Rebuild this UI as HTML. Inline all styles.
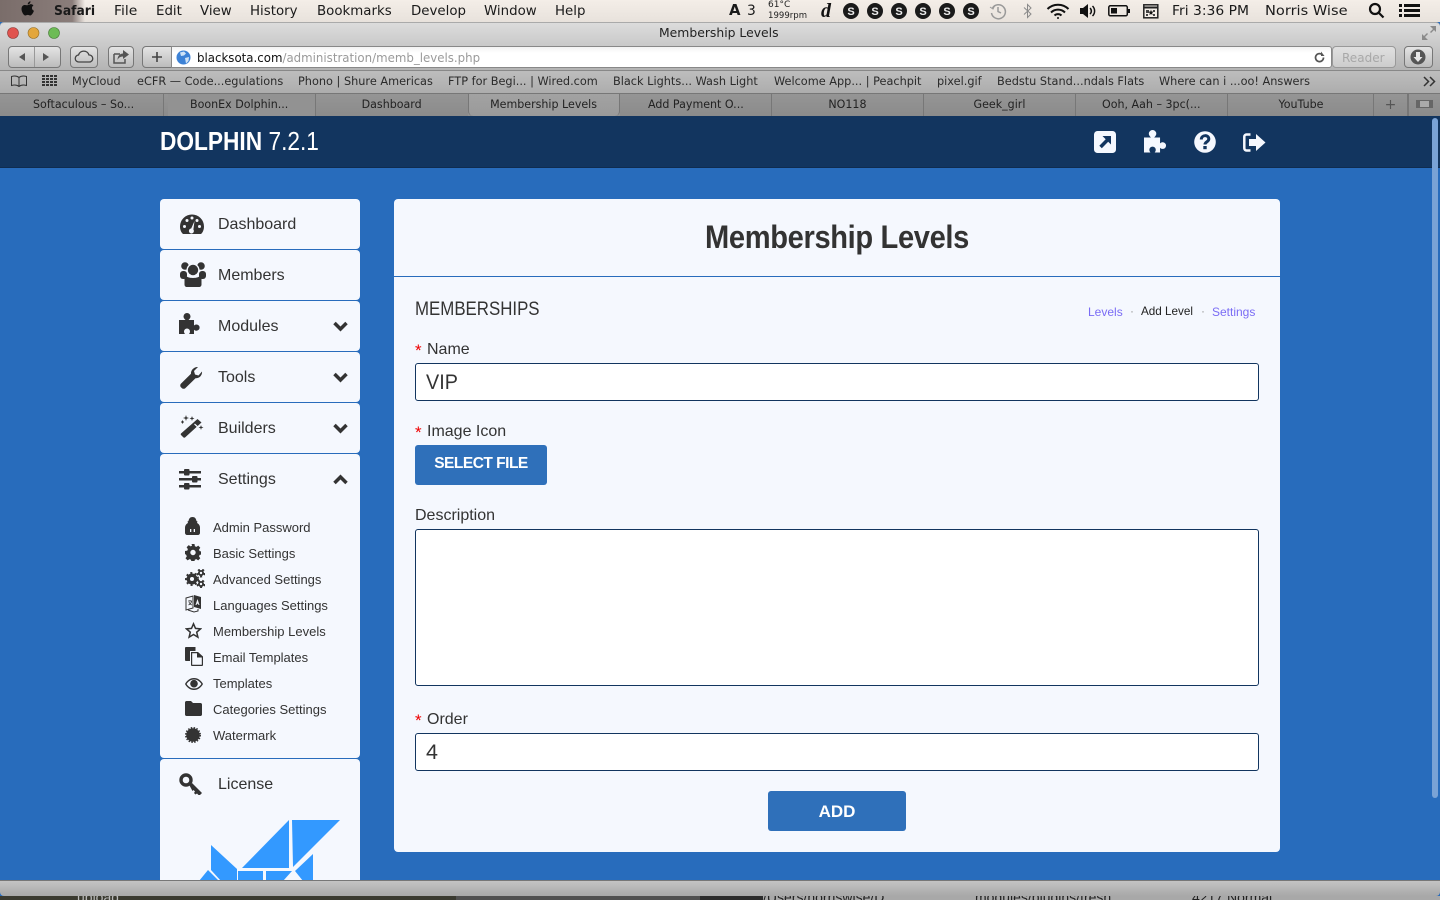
<!DOCTYPE html>
<html><head><meta charset="utf-8"><title>Membership Levels</title>
<style>
html,body{margin:0;padding:0;width:1440px;height:900px;overflow:hidden;background:#286cbc;font-family:"Liberation Sans",sans-serif;color:#333}
div,span,svg{position:absolute;box-sizing:border-box}
.t{white-space:nowrap;line-height:1}
.m{font-family:"DejaVu Sans",sans-serif;font-size:13.5px;color:#1a1a1a;top:5px;transform-origin:0 0;transform:scaleX(.99)}
.b{font-family:"DejaVu Sans",sans-serif;font-size:11.3px;color:#2a2a2a;top:76px;font-weight:400;transform-origin:0 0;transform:scaleX(1)}
.tab{top:94px;height:22px;border-right:1px solid #777;background:linear-gradient(#959595,#8b8b8b);font-family:"DejaVu Sans",sans-serif;font-size:11.3px;color:#222;text-align:center;line-height:22px;white-space:nowrap}
.tab span{position:static;display:inline-block;transform:scaleX(.98)}
.card{background:#f5f8fe;left:160px;width:200px;height:50px;border-radius:4px}
.mi{left:218px;font-size:16px;color:#333}
.si{left:213px;font-size:13px;color:#333}
.lab{font-size:16px;color:#333;left:427px}
.star{font-size:17px;color:#e00;left:415px}
.inp{left:415px;width:844px;background:#fff;border:1px solid #12355f;border-radius:3px}
.btn{background:#2f70ba;border-radius:3px;color:#fff;font-weight:700;text-align:center}
.ic{fill:#333}
</style></head><body>
<div style="left:0;top:0;width:1440px;height:900px;overflow:hidden">

<!-- menu bar -->
<div style="left:0;top:0;width:1440px;height:22px;background:linear-gradient(#f4eee8,#e8e2dc)"></div>
<div style="left:0;top:0;width:85px;height:22px;background:linear-gradient(90deg,#7a6d6a,#8a7d7a 85%,rgba(138,125,122,0))"></div>
<svg style="left:19px;top:1px" width="17" height="17" viewBox="0 0 17 17"><path fill="#111" d="M9 4c1 0 2-.9 2.800-.9 1 0 2 .5 2.600 1.400-2.200 1.300-1.800 4.400.6 5.300-.8 2-2.300 4.700-3.800 4.700-1 0-1.400-.6-2.400-.6s-1.500.6-2.400.6C4.500 14.500 2.500 10.500 2.500 8c0-2.700 1.700-4 3.400-4C7 4 8 4.600 9 4zM8.700 3.500c0-1.500 1.200-3 2.800-3.200.1 1.700-1.300 3.200-2.800 3.200z"/></svg>
<span class="t m" style="left:54px;font-weight:700;transform:scaleX(.91)">Safari</span>
<span class="t m" style="left:114px;transform:scaleX(1.03)">File</span>
<span class="t m" style="left:156px">Edit</span>
<span class="t m" style="left:200px">View</span>
<span class="t m" style="left:250px">History</span>
<span class="t m" style="left:317px">Bookmarks</span>
<span class="t m" style="left:411px">Develop</span>
<span class="t m" style="left:484px">Window</span>
<span class="t m" style="left:555px">Help</span>
<span class="t m" style="left:729px;font-weight:700;font-size:15px;top:3px">A</span><span class="t m" style="left:747px;font-size:14px;top:4px">3</span>
<span class="t" style="left:768px;top:1px;font-size:9px;color:#222;font-family:'DejaVu Sans',sans-serif">61°C</span>
<span class="t" style="left:768px;top:12px;font-size:9px;color:#222;font-family:'DejaVu Sans',sans-serif;transform-origin:0 0;transform:scaleX(.95)">1999rpm</span>
<span class="t" style="left:821px;top:1px;font-size:20px;font-weight:700;font-style:italic;font-family:'Liberation Serif',serif;color:#111">d</span>
<svg style="left:842px;top:2px" width="138" height="18" viewBox="0 0 138 18" font-family="Liberation Sans" font-weight="700" font-size="11" text-anchor="middle">
<g fill="#1a1a1a"><circle cx="9" cy="9" r="8"/><circle cx="33" cy="9" r="8"/><circle cx="57" cy="9" r="8"/><circle cx="81" cy="9" r="8"/><circle cx="105" cy="9" r="8"/><circle cx="129" cy="9" r="8"/></g>
<g fill="#eee" font-size="11"><text x="9" y="13">S</text><text x="33" y="13">S</text><text x="57" y="13">S</text><text x="81" y="13">S</text><text x="105" y="13">S</text><text x="129" y="13">S</text></g></svg>
<svg style="left:989px;top:2px" width="18" height="18" viewBox="0 0 18 18" fill="none" stroke="#999" stroke-width="1.500"><path d="M3.500 6A7 7 0 1 1 2.500 11"/><path d="M9 5v4.500l3 1.500"/><path d="M1 5l3 2 1.500-3" stroke-width="1"/></svg>
<svg style="left:1022px;top:3px" width="11" height="16" viewBox="0 0 11 16" fill="none" stroke="#8a8a8a" stroke-width="1"><path d="M2 4.500l7 6.500-3.500 3.500V1.500L9 5 2 11.500"/></svg>
<svg style="left:1046px;top:3px" width="24" height="16" viewBox="0 0 24 16" fill="none" stroke="#111" stroke-width="2"><path d="M1.500 6a15 15 0 0 1 21 0M5 9.500a10 10 0 0 1 14 0M8.500 12.500a5 5 0 0 1 7 0"/><circle cx="12" cy="15" r="1" fill="#111" stroke="none"/></svg>
<svg style="left:1079px;top:3px" width="19" height="16" viewBox="0 0 19 16"><path fill="#111" d="M1 5h3l5-4v14l-5-4H1z"/><path fill="none" stroke="#111" stroke-width="1.500" d="M11 5a4 4 0 0 1 0 6M13.500 3a7 7 0 0 1 0 10"/></svg>
<svg style="left:1108px;top:4px" width="23" height="14" viewBox="0 0 23 14"><rect x=".8" y="1.800" width="18.500" height="10" rx="1.500" fill="none" stroke="#111" stroke-width="1.500"/><rect x="3" y="4" width="6" height="5.500" fill="#111"/><rect x="20" y="5" width="2" height="4" fill="#111"/></svg>
<svg style="left:1143px;top:3px" width="16" height="16" viewBox="0 0 16 16"><rect x=".8" y="1.800" width="14" height="13" fill="#f4eee8" stroke="#222" stroke-width="1.500"/><path d="M.8 4.500h14" stroke="#222" stroke-width="2"/><path d="M3 7h3v3H3zM10 7h2v2h-2zM3 11h2v2H3zM10 11h2v2h-2z" fill="#444"/><path d="M8 6.500l.6 2 2 .2-1.500 1.300.5 2-1.600-1-1.700 1 .5-2L5.400 8.700l2-.2z" fill="#111"/></svg>
<span class="t m" style="left:1172px;transform:scaleX(1.03)">Fri 3:36 PM</span>
<span class="t m" style="left:1265px;transform:scaleX(1.08)">Norris Wise</span>
<svg style="left:1368px;top:2px" width="17" height="17" viewBox="0 0 17 17" fill="none" stroke="#111" stroke-width="2.200"><circle cx="7" cy="7" r="5"/><path d="M10.500 10.500l5 5"/></svg>
<svg style="left:1399px;top:3px" width="21" height="15" viewBox="0 0 21 15" fill="#111"><rect x="0" y="1" width="3" height="3"/><rect x="0" y="6" width="3" height="3"/><rect x="0" y="11" width="3" height="3"/><rect x="5" y="1" width="16" height="3"/><rect x="5" y="6" width="16" height="3"/><rect x="5" y="11" width="16" height="3"/></svg>

<!-- title bar + toolbar -->
<div style="left:0;top:22px;width:1440px;height:48px;background:linear-gradient(#dcdcdc,#b4b4b4);border-top:1px solid #aaa;border-radius:4px 4px 0 0"></div>
<svg style="left:7px;top:27px" width="56" height="12" viewBox="0 0 56 12"><circle cx="6" cy="6" r="5.500" fill="#e0534e" stroke="#8c3a38" stroke-width=".6"/><circle cx="26.500" cy="6" r="5.500" fill="#e3a63c" stroke="#96702a" stroke-width=".6"/><circle cx="47" cy="6" r="5.500" fill="#6dbb55" stroke="#477a38" stroke-width=".6"/></svg>
<span class="t" style="left:659px;top:27px;font-family:'DejaVu Sans',sans-serif;font-size:12.500px;color:#222;transform-origin:0 0;transform:scaleX(.99)">Membership Levels</span>
<svg style="left:1422px;top:26px" width="14" height="14" viewBox="0 0 14 14" fill="#8a8a8a"><path d="M8 0h6v6l-2-2-3 3-1-1 3-3zM6 14H0V8l2 2 3-3 1 1-3 3z"/></svg>

<div style="left:8px;top:46px;width:53px;height:22px;border:1px solid #777;border-radius:4px;background:linear-gradient(#e4e4e4,#bcbcbc)"></div>
<div style="left:34px;top:47px;width:1px;height:20px;background:#999"></div>
<svg style="left:8px;top:46px" width="53" height="22" viewBox="0 0 53 22" fill="#555"><path d="M17 7v8l-6-4zM35 7v8l6-4z"/></svg>
<div style="left:70px;top:46px;width:28px;height:22px;border:1px solid #777;border-radius:4px;background:linear-gradient(#e4e4e4,#bcbcbc)"></div>
<svg style="left:74px;top:48px" width="20" height="18" viewBox="0 0 20 18" fill="none" stroke="#444" stroke-width="1.300"><path d="M5 14a3.500 3.500 0 0 1-.5-7A5.500 5.500 0 0 1 15 7a3.500 3.500 0 0 1 .5 7z"/></svg>
<div style="left:108px;top:46px;width:26px;height:22px;border:1px solid #777;border-radius:4px;background:linear-gradient(#e4e4e4,#bcbcbc)"></div>
<svg style="left:112px;top:49px" width="18" height="16" viewBox="0 0 18 16"><path d="M2 5h6M2 5v9h11v-4" fill="none" stroke="#555" stroke-width="1.500"/><path fill="#555" d="M11 1l6 4.500-6 4.500V7.500C8 7.500 6.500 9 5.500 11c0-4 2.500-6.500 5.500-6.500z"/></svg>
<div style="left:142px;top:46px;width:1130px;height:22px;border:1px solid #777;border-radius:4px 0 0 4px;background:linear-gradient(#e4e4e4,#bcbcbc)"></div>
<svg style="left:150px;top:50px" width="14" height="14" viewBox="0 0 14 14" fill="#444"><path d="M6.200 2h1.600v4.200H12v1.600H7.800V12H6.200V7.800H2V6.200h4.200z"/></svg>
<div style="left:171px;top:46px;width:1161px;height:22px;border:1px solid #888;background:linear-gradient(#f2f2f2,#fff 30%);border-radius:0 3px 3px 0"></div>
<svg style="left:176px;top:50px" width="15" height="15" viewBox="0 0 15 15"><circle cx="7.500" cy="7.500" r="7" fill="#3d82d6"/><path fill="#cfe3f7" d="M4 2.500l4-1 2 2-2 2-3 .5zM9 8l4-1-.5 4-2.500 2.500z"/></svg>
<span class="t" style="left:197px;top:52px;font-family:'DejaVu Sans',sans-serif;font-size:12.400px;color:#111;transform-origin:0 0;transform:scaleX(.952)">blacksota.com<span style="position:static;color:#9a9a9a">/administration/memb_levels.php</span></span>
<svg style="left:1313px;top:51px" width="13" height="13" viewBox="0 0 13 13" fill="none" stroke="#555" stroke-width="1.700"><path d="M10.500 6.500a4 4 0 1 1-1.500-3"/><path d="M8 .5v4.500h3.500z" fill="#555" stroke="none"/></svg>
<div style="left:1332px;top:46px;width:64px;height:22px;border:1px solid #999;border-radius:4px;background:linear-gradient(#e0e0e0,#cdcdcd)"></div>
<span class="t" style="left:1342px;top:52px;font-family:'DejaVu Sans',sans-serif;font-size:12.400px;color:#a8a8a8;transform-origin:0 0;transform:scaleX(.97)">Reader</span>
<div style="left:1404px;top:46px;width:29px;height:22px;border:1px solid #777;border-radius:4px;background:linear-gradient(#e4e4e4,#bcbcbc)"></div>
<svg style="left:1410px;top:49px" width="16" height="16" viewBox="0 0 16 16"><circle cx="8" cy="8" r="7.500" fill="#555"/><path fill="#e8e8e8" d="M6 3h4v5h2.500L8 13 3.500 8H6z"/></svg>

<!-- bookmarks -->
<div style="left:0;top:70px;width:1440px;height:24px;background:linear-gradient(#bdbdbd,#acacac);border-top:1px solid #888"></div>
<svg style="left:10px;top:75px" width="18" height="12" viewBox="0 0 18 12" fill="none" stroke="#333" stroke-width="1"><path d="M9 2.500C7 .8 4 .8 1.500 1.500v9c2.500-.7 5.500-.7 7.500 1 2-1.700 5-1.700 7.500-1v-9C14 .8 11 .8 9 2.500zM9 2.500v9"/></svg>
<svg style="left:42px;top:75px" width="15" height="12" viewBox="0 0 15 12" fill="#333"><path d="M0 0h3v2H0zM4 0h3v2H4zM8 0h3v2H8zM12 0h3v2h-3zM0 3h3v2H0zM4 3h3v2H4zM8 3h3v2H8zM12 3h3v2h-3zM0 6h3v2H0zM4 6h3v2H4zM8 6h3v2H8zM12 6h3v2h-3zM0 9h3v2H0zM4 9h3v2H4zM8 9h3v2H8zM12 9h3v2h-3z"/></svg>
<span class="t b" style="left:72px">MyCloud</span>
<span class="t b" style="left:137px">eCFR — Code...egulations</span>
<span class="t b" style="left:298px">Phono | Shure Americas</span>
<span class="t b" style="left:448px">FTP for Begi... | Wired.com</span>
<span class="t b" style="left:613px">Black Lights... Wash Light</span>
<span class="t b" style="left:774px">Welcome App... | Peachpit</span>
<span class="t b" style="left:937px">pixel.gif</span>
<span class="t b" style="left:997px">Bedstu Stand...ndals Flats</span>
<span class="t b" style="left:1159px">Where can i ...oo! Answers</span>
<svg style="left:1423px;top:76px" width="13" height="11" viewBox="0 0 13 11" fill="none" stroke="#333" stroke-width="1.500"><path d="M1 1l4.500 4.500L1 10M7 1l4.500 4.500L7 10"/></svg>

<!-- tabs -->
<div style="left:0;top:93px;width:1440px;height:23px;background:#929292;border-top:1px solid #777"></div>
<div class="tab" style="left:0;width:168px;border-right:none"><span>Softaculous – So...</span></div>
<div style="left:118px;top:94px;width:46px;height:22px;border-right:1px solid #777"></div>
<div class="tab" style="left:164px;width:152px;background:none"><span>BoonEx Dolphin...</span></div>
<div class="tab" style="left:316px;width:152px;border-right:none"><span>Dashboard</span></div>
<div class="tab" style="left:468px;width:152px;background:linear-gradient(#a2a2a2,#9a9a9a);border:none;border-left:1px solid #777;border-right:1px solid #777;border-radius:0 0 5px 5px"><span>Membership Levels</span></div>
<div class="tab" style="left:620px;width:152px"><span>Add Payment O...</span></div>
<div class="tab" style="left:772px;width:152px"><span>NO118</span></div>
<div class="tab" style="left:924px;width:152px"><span>Geek_girl</span></div>
<div class="tab" style="left:1076px;width:152px"><span>Ooh, Aah – 3pc(...</span></div>
<div class="tab" style="left:1228px;width:146px"><span>YouTube</span></div>
<div class="tab" style="left:1374px;width:34px;color:#555;font-size:14px">+</div>
<div class="tab" style="left:1408px;width:32px;border-right:none;border-left:1px solid #777"></div>
<svg style="left:1416px;top:100px" width="17" height="8" viewBox="0 0 17 8" fill="#666"><path d="M0 0h17v8H0z"/><path d="M4 1h9v6H4z" fill="#aaa"/></svg>

<!-- app header -->
<div style="left:0;top:116px;width:1440px;height:52px;background:#12355f;border-bottom:1px solid #0f2c50"></div>
<span class="t" style="left:160px;top:130px;font-size:25.500px;font-weight:700;color:#fff;transform-origin:0 0;transform:scaleX(.89)">DOLPHIN <span style="position:static;font-weight:400">7.2.1</span></span>
<svg style="left:1094px;top:131px" width="22" height="22" viewBox="0 0 22 22"><rect width="22" height="22" rx="3.500" fill="#f5f8fe"/><path fill="#12355f" d="M8.500 5h8.500v8.500l-2.800-2.800-6.400 6.500-2.500-2.500 6.400-6.500z"/></svg>
<svg style="left:1143px;top:130px" width="25" height="23" viewBox="0 0 21.500 21.500"><path fill="#f5f8fe" d="M0 7h6.500C5 5.500 4.500 4.500 4.500 3.500a3.500 3.500 0 0 1 7 0c0 1-.5 2-2 3.500H15v5.500c1-.7 1.500-1 2.500-1a3 3 0 0 1 0 6.200c-1 0-1.500-.3-2.500-1V21H10c.7-1 1-1.600 1-2.500a3 3 0 0 0-6 0c0 .9.300 1.500 1 2.500H0z"/></svg>
<svg style="left:1194px;top:131px" width="22" height="22" viewBox="0 0 22 22"><circle cx="11" cy="11" r="10.800" fill="#f5f8fe"/><path fill="none" stroke="#12355f" stroke-width="3" d="M7.300 8.500c0-5 7.500-5 7.500-.5 0 3-3.800 2.800-3.800 5.500"/><rect x="9.300" y="15" width="3.400" height="3.200" fill="#12355f"/></svg>
<svg style="left:1243px;top:133px" width="23" height="19" viewBox="0 0 23 19"><path fill="none" stroke="#f5f8fe" stroke-width="2.500" d="M7.500 1.500H3.500A2.200 2.200 0 0 0 1.300 3.700v11.600a2.200 2.200 0 0 0 2.200 2.200h4"/><path fill="#f5f8fe" d="M6 6h7V1l9.500 8.500L13 18v-5H6z"/></svg>

<!-- scrollbar -->
<div style="left:1432px;top:118px;width:6px;height:680px;background:#7aa3d6;border-radius:3px"></div>

<!-- sidebar -->
<div class="card" style="top:199px"></div>
<div class="card" style="top:250px"></div>
<div class="card" style="top:301px"></div>
<div class="card" style="top:352px"></div>
<div class="card" style="top:403px"></div>
<div class="card" style="top:454px;height:304px"></div>
<div class="card" style="top:759px;height:122px;border-radius:4px 4px 0 0"></div>

<span class="t mi" style="top:217px">Dashboard</span>
<span class="t mi" style="top:268px">Members</span>
<span class="t mi" style="top:319px">Modules</span>
<span class="t mi" style="top:370px">Tools</span>
<span class="t mi" style="top:421px">Builders</span>
<span class="t mi" style="top:472px">Settings</span>
<span class="t mi" style="top:777px">License</span>

<svg style="left:179px;top:213px" width="26" height="22" viewBox="0 0 26 22"><path class="ic" d="M13 1.500A12 12 0 0 0 1 13.500c0 2.500.7 4.700 2 6.500l1 1h18l1-1c1.300-1.800 2-4 2-6.500a12 12 0 0 0-12-12z"/><g fill="#f5f8fe"><circle cx="5.500" cy="13.500" r="1.500"/><circle cx="8" cy="7.500" r="1.500"/><circle cx="13" cy="5" r="1.500"/><circle cx="18" cy="7.500" r="1.500"/><circle cx="20.500" cy="13.500" r="1.500"/><path d="M15.500 8l-3.300 7.500a2.500 2.500 0 1 0 2.200 1z"/></g></svg>
<svg style="left:180px;top:261px" width="26" height="26" viewBox="0 0 26 26"><g class="ic"><circle cx="5" cy="5" r="3.800"/><circle cx="21" cy="5" r="3.800"/><rect x="0" y="10" width="7" height="8" rx="3"/><rect x="19" y="10" width="7" height="8" rx="3"/></g><circle cx="13" cy="9" r="6.500" fill="#f5f8fe"/><circle class="ic" cx="13" cy="9" r="5.200"/><path class="ic" d="M5.500 14.500c2.500 3.300 12.500 3.300 15 0 .6 0 1 .5 1 1v8c0 1.500-1 2.500-2.500 2.500H7c-1.500 0-2.500-1-2.500-2.500v-8c0-.5.400-1 1-1z"/></svg>
<svg style="left:179px;top:313px" width="24" height="22" viewBox="0 0 24 22"><path class="ic" d="M0 7h6.500C5 5.500 4.500 4.500 4.500 3.500a3.500 3.500 0 0 1 7 0c0 1-.5 2-2 3.500H15v5.500c1-.7 1.500-1 2.500-1a3 3 0 0 1 0 6.200c-1 0-1.500-.3-2.500-1V21H10c.7-1 1-1.600 1-2.500a3 3 0 0 0-6 0c0 .9.300 1.500 1 2.500H0z"/></svg>
<svg style="left:180px;top:366px" width="23" height="23" viewBox="0 0 23 23"><path class="ic" d="M22 5.500c.5 3.500-2.500 7-6.500 6.800L5.500 22c-1 1-2.700 1-3.800 0l-.7-.7c-1-1-1-2.700 0-3.700l10-9.800C10.500 4 14.500.5 18 1l-4 4 1 3.500 3.500 1z"/></svg>
<svg style="left:180px;top:415px" width="24" height="23" viewBox="0 0 24 23"><path class="ic" d="M17.500 4l4 3.500L5 22.500c-.5.300-1 .300-1.500 0L1 20c-.4-.5-.4-1 0-1.500z"/><path d="M14.500 9l3.300 3" stroke="#f5f8fe" stroke-width="1.200"/><g class="ic"><path d="M6 0l.7 2.300L9 3l-2.300.7L6 6l-.7-2.300L3 3l2.300-.7zM12 1l.6 1.800 1.900.7-1.900.6-.6 1.900-.6-1.900-1.900-.6 1.900-.7zM21 10l.6 1.800 1.900.7-1.900.6-.6 1.900-.6-1.900-1.900-.6 1.900-.7zM1 6.500h1v-1h1v1h1v1H3v1H2v-1H1z"/></g></svg>
<svg style="left:179px;top:468px" width="23" height="22" viewBox="0 0 23 22"><g class="ic"><rect x="0" y="3" width="22" height="2.500"/><rect x="0" y="10" width="22" height="2.500"/><rect x="0" y="17" width="22" height="2.500"/><rect x="5" y="1" width="5.500" height="6.500" rx="1"/><rect x="13" y="8" width="5.500" height="6.500" rx="1"/><rect x="5" y="15" width="5.500" height="6.500" rx="1"/></g></svg>
<svg style="left:179px;top:773px" width="24" height="23" viewBox="0 0 24 23"><circle cx="7" cy="7" r="5" fill="none" stroke="#333" stroke-width="3.400"/><path fill="#333" d="M10.500 12.500l2.500-2.500 10 10-2 2-1.500 0-1.500-1.500-1.500 1-1.500-1.500 1-1.500-1.500-1.500-1 1z"/></svg>

<svg style="left:333px;top:321px" width="15" height="11" viewBox="0 0 15 11"><path fill="none" stroke="#333" stroke-width="3.500" d="M1.500 2l6 6 6-6"/></svg>
<svg style="left:333px;top:372px" width="15" height="11" viewBox="0 0 15 11"><path fill="none" stroke="#333" stroke-width="3.500" d="M1.500 2l6 6 6-6"/></svg>
<svg style="left:333px;top:423px" width="15" height="11" viewBox="0 0 15 11"><path fill="none" stroke="#333" stroke-width="3.500" d="M1.500 2l6 6 6-6"/></svg>
<svg style="left:333px;top:474px" width="15" height="11" viewBox="0 0 15 11"><path fill="none" stroke="#333" stroke-width="3.500" d="M1.500 9l6-6 6 6"/></svg>

<span class="t si" style="top:521px">Admin Password</span>
<span class="t si" style="top:547px">Basic Settings</span>
<span class="t si" style="top:573px">Advanced Settings</span>
<span class="t si" style="top:599px">Languages Settings</span>
<span class="t si" style="top:625px">Membership Levels</span>
<span class="t si" style="top:651px">Email Templates</span>
<span class="t si" style="top:677px">Templates</span>
<span class="t si" style="top:703px">Categories Settings</span>
<span class="t si" style="top:729px">Watermark</span>

<svg style="left:185px;top:517px" width="15" height="18" viewBox="0 0 15 18"><path class="ic" d="M7.500 0c2.500 0 3.500 1.500 4 4l1 .5-.5 1.500c2 1 3 2.500 3 5v5c0 1-1 2-2 2H2c-1 0-2-1-2-2v-5c0-2.500 1-4 3-5L2.500 4.500 3.500 4c.5-2.500 1.500-4 4-4z"/><path d="M5 12h1.300v3H5zM8.700 12H10v3H8.700z" fill="#f5f8fe"/></svg>
<svg style="left:185px;top:544px" width="16" height="17" viewBox="0 0 16 17"><path class="ic" fill-rule="evenodd" d="M6.500 0h3l.4 2.300 1.500.6 1.900-1.300 2 2.100-1.300 1.900.6 1.500 2.300.4v3l-2.300.4-.6 1.500 1.300 1.900-2.100 2.100-1.900-1.300-1.500.6-.4 2.300h-3l-.4-2.300-1.500-.6-1.900 1.300-2.100-2.100 1.300-1.900-.6-1.500L0 10V7l2.300-.4.6-1.500L1.600 3.200l2.100-2.100 1.900 1.300 1.500-.6zM8 5.800a2.700 2.700 0 1 0 0 5.400 2.700 2.700 0 0 0 0-5.400z"/></svg>
<svg style="left:185px;top:569px" width="20" height="19" viewBox="0 0 20 19"><g class="ic"><circle cx="7" cy="10" r="5.500"/><circle cx="16" cy="4" r="3"/><circle cx="16" cy="15" r="3"/></g><g fill="none" stroke="#333" stroke-width="2" stroke-dasharray="2 2.400"><circle cx="7" cy="10" r="6"/><circle cx="16" cy="4" r="3.500"/><circle cx="16" cy="15" r="3.500"/></g><g fill="#f5f8fe"><circle cx="7" cy="10" r="2"/><circle cx="16" cy="4" r="1.200"/><circle cx="16" cy="15" r="1.200"/></g></svg>
<svg style="left:185px;top:595px" width="16" height="18" viewBox="0 0 16 18"><path class="ic" d="M9 0l7 2v12l-7-2z"/><path d="M1 3l7-2v12l-7 2zM3 15l6 2 4-1v-2" fill="none" stroke="#333" stroke-width="1"/><path d="M3 6h4M5 5v1M3.500 10c2-1 3-2.500 3-4M4 7c.5 1.500 1.500 2.500 3 3" fill="none" stroke="#333" stroke-width=".8"/><path d="M12.500 4l-2 6h1l.4-1.300h1.200l.4 1.300h1z" fill="#f5f8fe"/></svg>
<svg style="left:185px;top:622px" width="17" height="17" viewBox="0 0 17 17"><path fill="none" stroke="#333" stroke-width="1.500" d="M8.500 1.800l2 4.600 5 .5-3.800 3.300 1.200 5-4.400-2.700-4.400 2.700 1.200-5L1.500 6.900l5-.5z"/></svg>
<svg style="left:185px;top:647px" width="18" height="19" viewBox="0 0 18 19"><path class="ic" d="M1 0h9.500v4H5v10H1c-.6 0-1-.4-1-1V1c0-.6.400-1 1-1z"/><path class="ic" d="M6 5h7l5 4.500V18c0 .6-.4 1-1 1H7c-.6 0-1-.4-1-1z"/><path d="M7.200 6.200h4.800v4.300h4.800V17.800H7.200z" fill="#f5f8fe"/></svg>
<svg style="left:185px;top:678px" width="18" height="12" viewBox="0 0 18 12"><path class="ic" fill-rule="evenodd" d="M9 0c3.800 0 7 2.300 9 6-2 3.700-5.200 6-9 6s-7-2.300-9-6c2-3.700 5.200-6 9-6zM9 1.500C6 1.500 3.300 3.200 1.600 6 3.300 8.800 6 10.500 9 10.500s5.700-1.700 7.400-4.500C14.700 3.200 12 1.500 9 1.500z"/><circle class="ic" cx="9" cy="5.700" r="3.800"/></svg>
<svg style="left:185px;top:701px" width="17" height="15" viewBox="0 0 17 15"><path class="ic" d="M1.500 0h4.500l2 2h7.500c.8 0 1.500.7 1.500 1.500V13.500c0 .8-.7 1.500-1.500 1.500h-14C.7 15 0 14.300 0 13.500v-12C0 .7.700 0 1.500 0z"/></svg>
<svg style="left:185px;top:727px" width="16" height="16" viewBox="0 0 16 16"><circle class="ic" cx="8" cy="8" r="6.800"/><circle cx="8" cy="8" r="7.300" fill="none" stroke="#333" stroke-width="1.400" stroke-dasharray="1.500 1.400"/></svg>

<!-- logo -->
<svg style="left:160px;top:815px" width="200" height="66" viewBox="160 815 200 66"><g fill="#3399ff">
<path d="M289 820V868H242z"/>
<path d="M292 820H340L293 867z"/>
<path d="M211 845L237 869V881H221L211 870z"/>
<path d="M208 870L199 881H219z"/>
<path d="M238 871H263V881H238z"/>
<path d="M266 871H292L283 881H266z"/>
<path d="M313 854V881H303L295 871z"/>
</g></svg>

<!-- main panels -->
<div style="left:394px;top:199px;width:886px;height:77px;background:#f5f8fe;border-radius:4px 4px 0 0"></div>
<div style="left:394px;top:277px;width:886px;height:575px;background:#f5f8fe;border-radius:0 0 4px 4px"></div>
<span class="t" style="left:394px;width:886px;text-align:center;top:221px;font-size:32.500px;font-weight:700;color:#333;letter-spacing:-.4px;transform-origin:50% 0;transform:scaleX(.895)">Membership Levels</span>

<span class="t" style="left:415px;top:300px;font-size:19px;color:#333;transform-origin:0 0;transform:scaleX(.887)">MEMBERSHIPS</span>
<span class="t" style="left:1088px;top:306px;font-size:12px;color:#7a6cf5">Levels</span>
<span class="t" style="left:1130px;top:305px;font-size:12px;color:#999">·</span>
<span class="t" style="left:1141px;top:306px;font-size:11.700px;color:#222">Add Level</span>
<span class="t" style="left:1201px;top:305px;font-size:12px;color:#999">·</span>
<span class="t" style="left:1212px;top:306px;font-size:12px;color:#7a6cf5">Settings</span>

<span class="t star" style="top:342px">*</span><span class="t lab" style="top:342px">Name</span>
<div class="inp" style="top:363px;height:38px"></div>
<span class="t" style="left:426px;top:372px;font-size:21.500px;color:#333;transform-origin:0 0;transform:scaleX(.92)">VIP</span>

<span class="t star" style="top:424px">*</span><span class="t lab" style="top:424px">Image Icon</span>
<div class="btn" style="left:415px;top:445px;width:132px;height:40px;line-height:37px;font-size:15.500px;letter-spacing:-.5px">SELECT FILE</div>

<span class="t lab" style="left:415px;top:508px">Description</span>
<div class="inp" style="top:529px;height:157px"></div>

<span class="t star" style="top:712px">*</span><span class="t lab" style="top:712px">Order</span>
<div class="inp" style="top:733px;height:38px"></div>
<span class="t" style="left:426px;top:742px;font-size:21.500px;color:#333">4</span>

<div class="btn" style="left:768px;top:791px;width:138px;height:40px;line-height:41px;font-size:17px">ADD</div>

<!-- bottom strip -->
<div style="left:0;top:896px;width:1440px;height:4px;background:#3a3a30;overflow:hidden">
  <div style="left:456px;top:0;width:244px;height:4px;background:#505050"></div>
  <div style="left:700px;top:0;width:63px;height:4px;background:#2c2c2c"></div>
  <div style="left:763px;top:0;width:677px;height:4px;background:#a8a8a8"></div>
  <span class="t" style="left:77px;top:-6px;font-size:14px;color:#bbb">upload</span>
  <span class="t" style="left:763px;top:-6px;font-size:14px;color:#222">/Users/norriswise/D</span>
  <span class="t" style="left:975px;top:-6px;font-size:14px;color:#222">modules/plugins/fresh</span>
  <span class="t" style="left:1192px;top:-6px;font-size:14px;color:#222">4217  Normal</span>
</div>
<div style="left:0;top:880px;width:1440px;height:16px;background:linear-gradient(#c4c4c4,#a8a8a8);border-top:1px solid #777;border-radius:0 0 4px 4px"></div>
</div>
</body></html>
